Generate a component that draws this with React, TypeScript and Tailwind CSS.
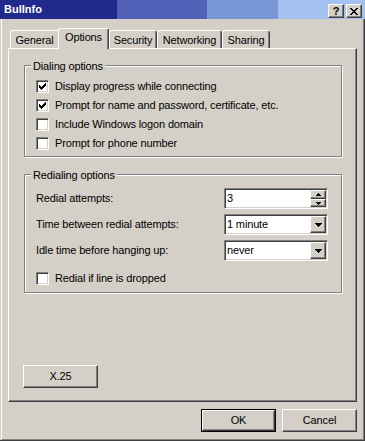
import React from "react";

const raised =
  "border border-t-white border-l-white border-r-[#404040] border-b-[#404040] shadow-[inset_-1px_-1px_0_#808080]";
const sunken =
  "border border-t-[#808080] border-l-[#808080] border-r-white border-b-white shadow-[inset_1px_1px_0_#404040,inset_-1px_-1px_0_#d4d0c8]";

function CheckGlyph() {
  return (
    <svg width="7" height="7" viewBox="0 0 7 7" shapeRendering="crispEdges">
      <path
        d="M6 0h1v1h-1z M5 1h2v1h-2z M0 2h1v1h-1z M4 2h3v1h-3z M0 3h2v1h-2z M3 3h3v1h-3z M0 4h5v1h-5z M1 5h3v1h-3z M2 6h1v1h-1z"
        fill="#000"
      />
    </svg>
  );
}

function ArrowDown() {
  return (
    <svg width="7" height="4" viewBox="0 0 7 4" shapeRendering="crispEdges">
      <path d="M0 0h7v1h-7z M1 1h5v1h-5z M2 2h3v1h-3z M3 3h1v1h-1z" fill="#000" />
    </svg>
  );
}

function SpinUp() {
  return (
    <svg width="5" height="3" viewBox="0 0 5 3" shapeRendering="crispEdges">
      <path d="M2 0h1v1h-1z M1 1h3v1h-3z M0 2h5v1h-5z" fill="#000" />
    </svg>
  );
}

function SpinDown() {
  return (
    <svg width="5" height="3" viewBox="0 0 5 3" shapeRendering="crispEdges">
      <path d="M0 0h5v1h-5z M1 1h3v1h-3z M2 2h1v1h-1z" fill="#000" />
    </svg>
  );
}

function CloseGlyph() {
  return (
    <svg width="8" height="7" viewBox="0 0 8 7" shapeRendering="crispEdges">
      <path
        d="M0 0h2v1h-2z M6 0h2v1h-2z M1 1h2v1h-2z M5 1h2v1h-2z M2 2h4v1h-4z M3 3h2v1h-2z M2 4h4v1h-4z M1 5h2v1h-2z M5 5h2v1h-2z M0 6h2v1h-2z M6 6h2v1h-2z"
        fill="#000"
      />
    </svg>
  );
}

function CheckBox({ checked }: { checked?: boolean }) {
  return (
    <div className={`w-[13px] h-[13px] shrink-0 bg-white flex items-start ${sunken}`}>
      {checked && (
        <div className="mt-[2px] ml-[2px] flex">
          <CheckGlyph />
        </div>
      )}
    </div>
  );
}

function CheckRow({ checked, label }: { checked?: boolean; label: string }) {
  return (
    <div className="flex items-start gap-[6px]">
      <CheckBox checked={checked} />
      <span className="whitespace-nowrap">{label}</span>
    </div>
  );
}

function Combo({ value }: { value: string }) {
  return (
    <div className={`w-[104px] h-[21px] bg-white flex items-stretch p-[1px] ${sunken}`}>
      <div className="flex-1 pl-[1px] flex items-center">{value}</div>
      <div className={`w-[16px] bg-[#d4d0c8] flex items-center justify-center ${raised}`}>
        <ArrowDown />
      </div>
    </div>
  );
}

function Spin({ value }: { value: string }) {
  return (
    <div className={`w-[104px] h-[21px] bg-white flex items-stretch p-[1px] ${sunken}`}>
      <div className="flex-1 pl-[1px] flex items-center">{value}</div>
      <div className="w-[16px] flex flex-col">
        <div className={`h-[9px] bg-[#d4d0c8] flex items-center justify-center ${raised}`}>
          <SpinUp />
        </div>
        <div className={`h-[8px] bg-[#d4d0c8] flex items-center justify-center ${raised}`}>
          <SpinDown />
        </div>
      </div>
    </div>
  );
}

function Button({ label, isDefault }: { label: string; isDefault?: boolean }) {
  if (isDefault) {
    return (
      <div className="w-[75px] h-[23px] border border-black flex">
        <div className={`flex-1 flex items-center justify-center ${raised}`}>{label}</div>
      </div>
    );
  }
  return (
    <div className={`w-[75px] h-[23px] flex items-center justify-center ${raised}`}>{label}</div>
  );
}

function TitleButton({ children }: { children: React.ReactNode }) {
  return (
    <div className={`w-[16px] h-[14px] bg-[#d4d0c8] flex items-center justify-center ${raised}`}>
      {children}
    </div>
  );
}

export default function App() {
  return (
    <div className="w-[365px] h-[441px] bg-[#d4d0c8] flex flex-col overflow-hidden font-['Liberation_Sans',Arial,sans-serif] text-[11px] leading-[13px] tracking-[-0.15px] text-black">
      {/* Title bar */}
      <div className="h-[19px] shrink-0 flex items-start pr-[3px] bg-[linear-gradient(to_right,#1f2a8c_0px,#1f2a8c_117px,#5061b7_117px,#5061b7_207px,#7a98d7_207px,#7a98d7_278px,#a3c2ef_278px)]">
        <div className="ml-[4px] mt-[3px] font-bold text-white tracking-normal">BulInfo</div>
        <div className="ml-auto mt-[4px] flex gap-[2px]">
          <TitleButton>
            <span className="font-bold text-[11px] leading-[11px] tracking-normal">?</span>
          </TitleButton>
          <TitleButton>
            <CloseGlyph />
          </TitleButton>
        </div>
      </div>

      {/* Body with frame */}
      <div className="flex-1 flex flex-col pl-px border-r border-b border-r-[#404040] border-b-[#404040]">
        <div className="flex-1 flex flex-col px-[6px] pt-[9px] border-l border-r border-b border-l-white border-r-[#808080] border-b-[#808080]">
          {/* Tabs */}
          <div className="flex items-end pl-[2px] h-[20px]">
            <div className="w-[48px] h-[18px] pt-[3px] text-center border-t border-l border-t-white border-l-white rounded-tl-[3px]">
              General
            </div>
            <div className="w-[51px] h-[21px] -mb-px relative z-10 bg-[#d4d0c8] pt-[2px] text-center border-t border-l border-r border-t-white border-l-white border-r-[#404040] shadow-[inset_-1px_0_0_#808080] rounded-t-[3px]">
              Options
            </div>
            <div className="w-[48px] h-[18px] pt-[3px] text-center border-t border-l border-r border-t-white border-l-white border-r-[#404040] shadow-[inset_-1px_0_0_#808080] rounded-t-[3px]">
              Security
            </div>
            <div className="w-[65px] h-[18px] pt-[3px] text-center border-t border-l border-r border-t-white border-l-white border-r-[#404040] shadow-[inset_-1px_0_0_#808080] rounded-t-[3px]">
              Networking
            </div>
            <div className="w-[48px] h-[18px] pt-[3px] text-center border-t border-l border-r border-t-white border-l-white border-r-[#404040] shadow-[inset_-1px_0_0_#808080] rounded-t-[3px]">
              Sharing
            </div>
          </div>

          {/* Panel */}
          <div className={`h-[354px] shrink-0 flex flex-col pl-[15px] pt-[16px] ${raised}`}>
            {/* Dialing options */}
            <div className="relative w-[318px] h-[92px] shrink-0 border border-[#808080] shadow-[1px_1px_0_#fff,inset_1px_1px_0_#fff] pl-[11px] pt-[14px] flex flex-col gap-[6px]">
              <div className="absolute left-[6px] top-[-6px] px-[2px] bg-[#d4d0c8]">Dialing options</div>
              <CheckRow checked label="Display progress while connecting" />
              <CheckRow checked label="Prompt for name and password, certificate, etc." />
              <CheckRow label="Include Windows logon domain" />
              <CheckRow label="Prompt for phone number" />
            </div>

            {/* Redialing options */}
            <div className="relative mt-[17px] w-[318px] h-[119px] shrink-0 border border-[#808080] shadow-[1px_1px_0_#fff,inset_1px_1px_0_#fff] pl-[11px] pt-[13px] flex flex-col">
              <div className="absolute left-[6px] top-[-6px] px-[2px] bg-[#d4d0c8]">Redialing options</div>
              <div className="grid grid-cols-[188px_104px] gap-y-[5px]">
                <div className="h-[21px] flex items-center">Redial attempts:</div>
                <Spin value="3" />
                <div className="h-[21px] flex items-center">Time between redial attempts:</div>
                <Combo value="1 minute" />
                <div className="h-[21px] flex items-center">Idle time before hanging up:</div>
                <Combo value="never" />
              </div>
              <div className="mt-[11px]">
                <CheckRow label="Redial if line is dropped" />
              </div>
            </div>

            <div className="mt-[72px] -ml-px">
              <Button label="X.25" />
            </div>
          </div>

          {/* Dialog buttons */}
          <div className="mt-[7px] flex justify-end gap-[6px]">
            <Button label="OK" isDefault />
            <Button label="Cancel" />
          </div>
        </div>
      </div>
    </div>
  );
}
